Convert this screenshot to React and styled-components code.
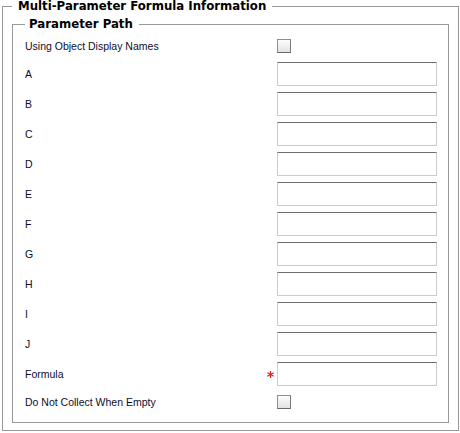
import React from "react";
import styled, { createGlobalStyle } from "styled-components";

const Global = createGlobalStyle`
  html, body { margin: 0; padding: 0; background: #fff; }
  body { font-family: "Liberation Sans", Arial, sans-serif; }
  * { box-sizing: border-box; }
`;

const Outer = styled.fieldset`
  margin: 0 0 0 2px;
  width: 457px;
  border: 1px solid #999;
  padding: 6px 9px 7px 9px;
  min-width: 0;
`;

const Inner = styled.fieldset`
  margin: 0;
  border: 1px solid #999;
  padding: 6px 11px 10px 12px;
  min-width: 0;
`;

const Legend = styled.legend`
  font-family: "DejaVu Sans", Verdana, sans-serif;
  font-weight: bold;
  font-size: 11.75px;
  line-height: 12px;
  height: 12px;
  color: #000;
  padding: 0 ${(p) => p.$pr || 6}px 0 ${(p) => p.$pl || 6}px;
`;

const Rows = styled.div`
  display: flex;
  flex-direction: column;
  gap: 6px;
`;

const Row = styled.div`
  display: flex;
  align-items: center;
  height: ${(p) => (p.$check ? 20 : 24)}px;
`;

const Label = styled.span`
  flex: 1;
  font-size: 10.5px;
  color: #0d0d2b;
  white-space: nowrap;
`;

const Marker = styled.svg`
  width: 7px;
  height: 7px;
  margin-right: 3px;
  flex: none;
`;

const TextInput = styled.input`
  width: 160px;
  height: 24px;
  margin: 0;
  padding: 0 3px;
  border: 1px solid #cbcbcb;
  border-top-color: #6f6f6f;
  background: #fff;
  font-size: 11px;
  font-family: "Liberation Sans", Arial, sans-serif;
  outline: none;
  flex: none;
`;

const CheckSlot = styled.div`
  width: 160px;
  flex: none;
  display: flex;
  align-items: center;
`;

const Check = styled.span`
  display: block;
  width: 14px;
  height: 14px;
  border: 1px solid #8e8e8e;
  border-bottom-color: #6a6a6a;
  border-right-color: #7a7a7a;
  background: linear-gradient(#fdfdfd, #e2e2e2);
`;

const Asterisk = () => (
  <Marker viewBox="0 0 7 7" aria-label="required">
    <g stroke="#e31c1c" strokeWidth="1.2" strokeLinecap="square">
      <line x1="3.5" y1="0.5" x2="3.5" y2="6.5" />
      <line x1="0.8" y1="2" x2="6.2" y2="5" />
      <line x1="0.8" y1="5" x2="6.2" y2="2" />
    </g>
  </Marker>
);

const letters = ["A", "B", "C", "D", "E", "F", "G", "H", "I", "J"];

export default function App() {
  return (
    <>
      <Global />
      <Outer>
        <Legend $pl={6} $pr={6}>Multi-Parameter Formula Information</Legend>
        <Inner>
          <Legend $pl={4} $pr={6}>Parameter Path</Legend>
          <Rows>
            <Row $check>
              <Label>Using Object Display Names</Label>
              <CheckSlot>
                <Check />
              </CheckSlot>
            </Row>
            {letters.map((l) => (
              <Row key={l}>
                <Label>{l}</Label>
                <TextInput type="text" />
              </Row>
            ))}
            <Row>
              <Label>Formula</Label>
              <Asterisk />
              <TextInput type="text" />
            </Row>
            <Row $check>
              <Label>Do Not Collect When Empty</Label>
              <CheckSlot>
                <Check />
              </CheckSlot>
            </Row>
          </Rows>
        </Inner>
      </Outer>
    </>
  );
}
